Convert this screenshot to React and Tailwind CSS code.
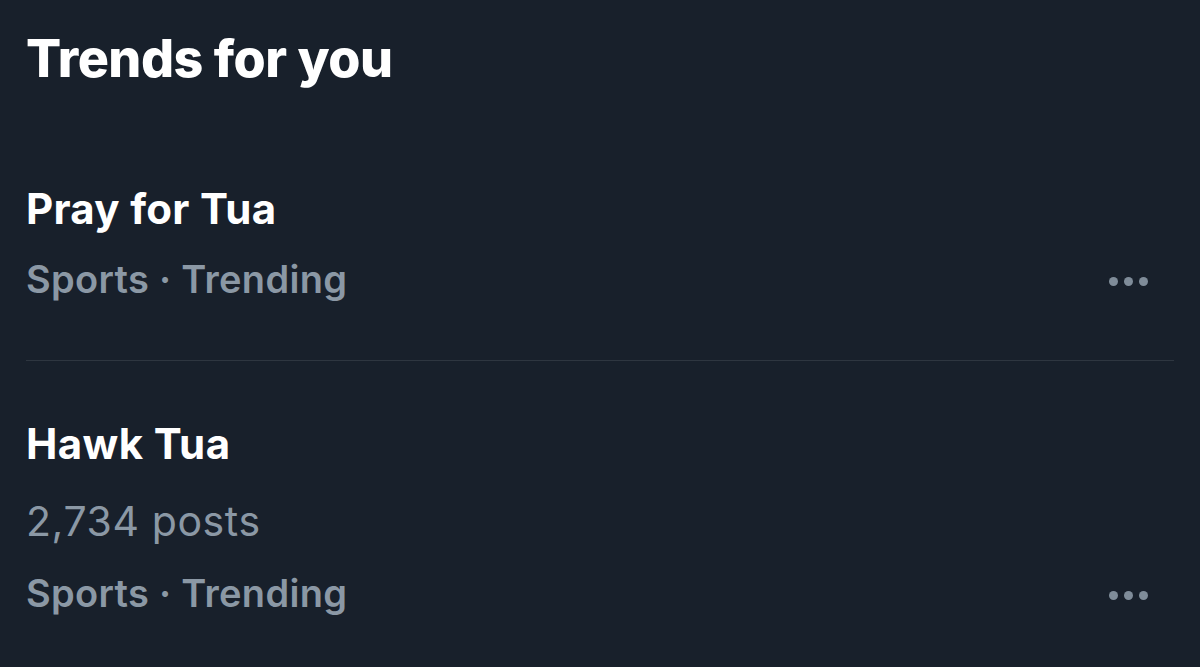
export default function App() {
  const font = { fontFamily: 'Inter, "Noto Sans", sans-serif' };
  const Dots = () => (
    <div className="flex gap-[6px] items-center mt-[4px]">
      <span className="w-[9px] h-[9px] rounded-full bg-[#7f8c99]" />
      <span className="w-[9px] h-[9px] rounded-full bg-[#7f8c99]" />
      <span className="w-[9px] h-[9px] rounded-full bg-[#7f8c99]" />
    </div>
  );
  return (
    <div className="w-[1200px] h-[667px] bg-[#18202b] overflow-hidden" style={font}>
      <div className="px-[26px]">
        <h1 className="pt-[27px] text-[52px] leading-[64px] font-extrabold text-white tracking-[-0.5px]">Trends for you</h1>
        <div className="pt-[93px] pb-[58px] border-b border-[#2e3640]">
          <div className="text-[42px] leading-[50px] font-bold text-white tracking-[0.3px]">Pray for Tua</div>
          <div className="flex items-center justify-between mt-[22px]">
            <div className="text-[38px] leading-[46px] font-semibold text-[#8b98a5] tracking-[0.3px]">Sports · Trending</div>
            <div className="mr-[26px]"><Dots /></div>
          </div>
        </div>
        <div className="pt-[58px]">
          <div className="text-[42px] leading-[50px] font-bold text-white tracking-[0.4px]">Hawk Tua</div>
          <div className="text-[41px] leading-[50px] font-normal text-[#8b98a5] mt-[27px] tracking-[0.6px]">2,734 posts</div>
          <div className="flex items-center justify-between mt-[24px]">
            <div className="text-[38px] leading-[46px] font-semibold text-[#8b98a5] tracking-[0.3px]">Sports · Trending</div>
            <div className="mr-[26px]"><Dots /></div>
          </div>
        </div>
      </div>
    </div>
  );
}
